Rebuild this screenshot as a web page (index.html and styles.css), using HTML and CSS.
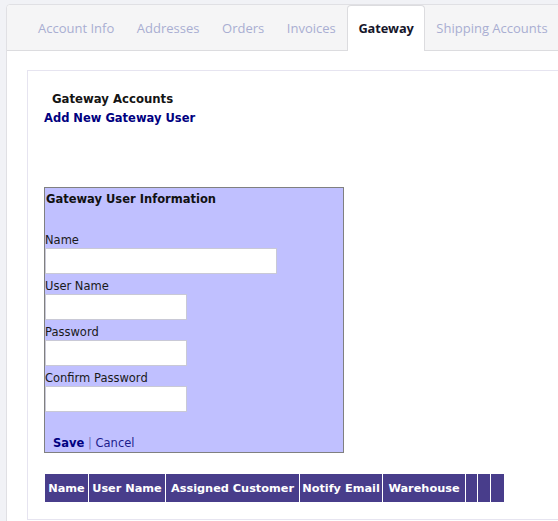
FILE: index.html
```html
<!DOCTYPE html>
<html>
<head>
<meta charset="utf-8">
<link rel="stylesheet" href="styles.css">
</head>
<body>
<div class="card">
  <ul class="tabs">
    <li class="tab">Account Info</li>
    <li class="tab">Addresses</li>
    <li class="tab">Orders</li>
    <li class="tab">Invoices</li>
    <li class="tab active">Gateway</li>
    <li class="tab">Shipping Accounts</li>
  </ul>
  <div class="pane">
    <div class="box">
      <div class="title">Gateway Accounts</div>
      <a class="add" href="#">Add New Gateway User</a>
      <div class="form">
        <div class="form-title">Gateway User Information</div>
        <label class="lbl">Name</label>
        <input class="in wide" type="text">
        <label class="lbl">User Name</label>
        <input class="in" type="text">
        <label class="lbl">Password</label>
        <input class="in" type="password">
        <label class="lbl">Confirm Password</label>
        <input class="in" type="password">
        <div class="actions"><a class="save" href="#">Save</a> <span class="sep">|</span> <a class="cancel" href="#">Cancel</a></div>
      </div>
      <table class="grid">
        <tr>
          <th class="c-name">Name</th>
          <th class="c-user">User Name</th>
          <th class="c-cust">Assigned Customer</th>
          <th class="c-mail">Notify Email</th>
          <th class="c-wh">Warehouse</th>
          <th class="c-b1"></th>
          <th class="c-b2"></th>
          <th class="c-b3"></th>
        </tr>
      </table>
    </div>
  </div>
</div>
</body>
</html>
```

FILE: styles.css
```css
html {
  overflow: hidden;
}
body {
  margin: 0;
  padding: 4px 0 0 6px;
  background: #f1f2f6;
  font-family: "DejaVu Sans", Verdana, sans-serif;
  font-size: 11.5px;
  color: #111;
}
.card {
  width: 640px;
  background: #fff;
  border: 1px solid #e0e0e4;
  border-radius: 4px 0 0 0;
}
.tabs {
  display: flex;
  margin: 0;
  padding: 0 0 0 20px;
  list-style: none;
  background: #f5f5f6;
  border-bottom: 1px solid #dcdcdf;
  height: 45px;
  border-radius: 4px 0 0 0;
}
.tab {
  font-family: "Open Sans", sans-serif;
  font-size: 13px;
  color: #a9aed2;
  line-height: 44px;
  height: 44px;
  padding: 0 10px;
  margin-right: 0.6px;
  border: 1px solid transparent;
  border-bottom: 0;
  border-radius: 4px 4px 0 0;
}
.tab.active {
  background: #fff;
  color: #16162a;
  font-weight: bold;
  font-size: 12.8px;
  letter-spacing: -0.1px;
  border-color: #dcdcdf;
  height: 45px;
}
.pane {
  padding: 19px 0 40px 20px;
}
.box {
  border: 1px solid #e6e4f0;
  padding: 20px 0 16px 16px;
}
.title {
  font-weight: bold;
  font-size: 11.7px;
  line-height: 16px;
  margin-left: 8px;
  color: #141414;
}
.add {
  display: block;
  margin-top: 3px;
  line-height: 16px;
  font-weight: bold;
  color: #000080;
  text-decoration: none;
}
.form {
  width: 298px;
  margin-top: 61px;
  background: #c0c0ff;
  border: 1px solid #808080;
  padding: 3px 0 0 0;
}
.form-title {
  font-weight: bold;
  line-height: 16px;
  margin-left: 1px;
  margin-bottom: 25px;
}
.lbl {
  display: block;
  line-height: 16px;
  color: #1a1a1a;
}
.in {
  display: block;
  box-sizing: border-box;
  width: 142px;
  height: 26px;
  margin: 0 0 4px 0;
  border: 1px solid #c9c9d6;
  background: #fff;
  padding: 0 4px;
}
.in.wide {
  width: 232px;
}
.actions {
  margin-top: 23px;
  padding-left: 8px;
  line-height: 16px;
  padding-bottom: 1px;
}
.save {
  font-weight: bold;
  color: #000080;
  text-decoration: none;
}
.sep {
  color: #6f73b8;
}
.cancel {
  color: #1c1c8c;
  text-decoration: none;
}
.grid {
  margin-top: 20px;
  border-collapse: separate;
  border-spacing: 1px;
  table-layout: fixed;
}
.grid th {
  box-sizing: border-box;
  background: #483d8b;
  color: #fff;
  font-weight: bold;
  font-size: 11.3px;
  height: 28px;
  padding: 0;
  text-align: center;
  white-space: nowrap;
  overflow: hidden;
}
.c-name { width: 43px; }
.c-user { width: 76px; }
.c-cust { width: 133px; }
.c-mail { width: 82px; }
.c-wh { width: 82px; }
.c-b1 { width: 11px; }
.c-b2 { width: 12px; }
.c-b3 { width: 13px; }
```
